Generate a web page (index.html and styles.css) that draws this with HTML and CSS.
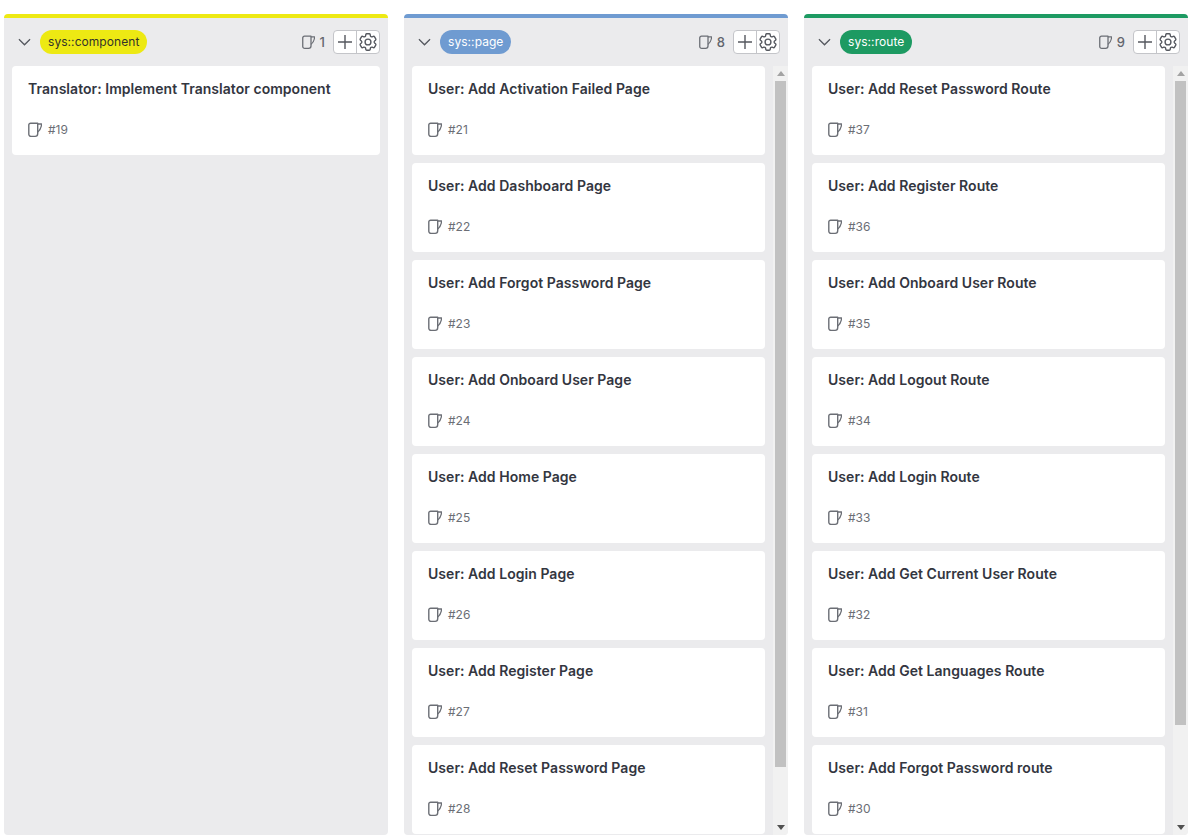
FILE: index.html
```html
<!DOCTYPE html>
<html lang="en">
<head>
    <meta charset="UTF-8">
    <meta name="viewport" content="width=device-width, initial-scale=1.0">
    <title>Board</title>
    <link rel="stylesheet" href="styles.css">
</head>
<body>
    <svg class="sprites" width="0" height="0">
        <symbol id="mug" viewBox="0 0 14 16">
            <path d="M2.6 1.2h7.1v10.6a2.6 2.6 0 0 1-2.6 2.6H3a2.2 2.2 0 0 1-2.2-2.2V3a1.8 1.8 0 0 1 1.8-1.8z" fill="none" stroke="currentColor" stroke-width="1.4" stroke-linejoin="round"/>
            <path d="M9.7 2h3.9c-.2 3.2-1.5 6-3.9 8" fill="none" stroke="currentColor" stroke-width="1.3" stroke-linejoin="round"/>
        </symbol>
        <symbol id="chevron" viewBox="0 0 14 8">
            <path d="M1 1l6 6 6-6" fill="none" stroke="currentColor" stroke-width="1.4"/>
        </symbol>
        <symbol id="plus" viewBox="0 0 14 14">
            <path d="M7 0v14M0 7h14" fill="none" stroke="currentColor" stroke-width="1.4"/>
        </symbol>
        <symbol id="gear" viewBox="0 0 24 24">
            <path fill="none" stroke="currentColor" stroke-width="1.5" stroke-linejoin="round" d="M9.594 3.94c.09-.542.56-.94 1.11-.94h2.593c.55 0 1.02.398 1.11.94l.213 1.281c.063.374.313.686.645.87.074.04.147.083.22.127.325.196.72.257 1.075.124l1.217-.456a1.125 1.125 0 0 1 1.37.49l1.296 2.247a1.125 1.125 0 0 1-.26 1.431l-1.003.827c-.293.241-.438.613-.43.992a7.723 7.723 0 0 1 0 .255c-.008.378.137.75.43.991l1.004.827c.424.35.534.955.26 1.43l-1.298 2.247a1.125 1.125 0 0 1-1.369.491l-1.217-.456c-.355-.133-.75-.072-1.076.124a6.47 6.47 0 0 1-.22.128c-.331.183-.581.495-.644.869l-.213 1.281c-.09.543-.56.94-1.11.94h-2.594c-.55 0-1.019-.398-1.11-.94l-.213-1.281c-.062-.374-.312-.686-.644-.87a6.52 6.52 0 0 1-.22-.127c-.325-.196-.72-.257-1.076-.124l-1.217.456a1.125 1.125 0 0 1-1.369-.49l-1.297-2.247a1.125 1.125 0 0 1 .26-1.431l1.004-.827c.292-.24.437-.613.43-.991a6.932 6.932 0 0 1 0-.255c.007-.38-.138-.751-.43-.992l-1.004-.827a1.125 1.125 0 0 1-.26-1.43l1.297-2.247a1.125 1.125 0 0 1 1.37-.491l1.216.456c.356.133.751.072 1.076-.124.072-.044.146-.086.22-.128.332-.183.582-.495.644-.869l.214-1.28Z"/>
            <circle cx="12" cy="12" r="3.2" fill="none" stroke="currentColor" stroke-width="1.5"/>
        </symbol>
    </svg>

    <div class="board">
        <section class="column column-component">
            <header class="column-head">
                <svg class="chevron"><use href="#chevron"/></svg>
                <span class="label label-component">sys::component</span>
                <span class="count"><svg class="mug"><use href="#mug"/></svg>1</span>
                <div class="actions">
                    <button class="action"><svg class="plus"><use href="#plus"/></svg></button>
                    <button class="action"><svg class="gear"><use href="#gear"/></svg></button>
                </div>
            </header>
            <div class="column-body">
                <ul class="cards">
                    <li class="card"><h3>Translator: Implement Translator component</h3><p><svg class="mug"><use href="#mug"/></svg>#19</p></li>
                </ul>
            </div>
        </section>

        <section class="column column-page">
            <header class="column-head">
                <svg class="chevron"><use href="#chevron"/></svg>
                <span class="label label-page">sys::page</span>
                <span class="count"><svg class="mug"><use href="#mug"/></svg>8</span>
                <div class="actions">
                    <button class="action"><svg class="plus"><use href="#plus"/></svg></button>
                    <button class="action"><svg class="gear"><use href="#gear"/></svg></button>
                </div>
            </header>
            <div class="column-body">
                <ul class="cards">
                    <li class="card"><h3>User: Add Activation Failed Page</h3><p><svg class="mug"><use href="#mug"/></svg>#21</p></li>
                    <li class="card"><h3>User: Add Dashboard Page</h3><p><svg class="mug"><use href="#mug"/></svg>#22</p></li>
                    <li class="card"><h3>User: Add Forgot Password Page</h3><p><svg class="mug"><use href="#mug"/></svg>#23</p></li>
                    <li class="card"><h3>User: Add Onboard User Page</h3><p><svg class="mug"><use href="#mug"/></svg>#24</p></li>
                    <li class="card"><h3>User: Add Home Page</h3><p><svg class="mug"><use href="#mug"/></svg>#25</p></li>
                    <li class="card"><h3>User: Add Login Page</h3><p><svg class="mug"><use href="#mug"/></svg>#26</p></li>
                    <li class="card"><h3>User: Add Register Page</h3><p><svg class="mug"><use href="#mug"/></svg>#27</p></li>
                    <li class="card"><h3>User: Add Reset Password Page</h3><p><svg class="mug"><use href="#mug"/></svg>#28</p></li>
                </ul>
                <div class="scrollbar">
                    <span class="arrow-up"></span>
                    <div class="track"><div class="thumb thumb-page"></div></div>
                    <span class="arrow-down"></span>
                </div>
            </div>
        </section>

        <section class="column column-route">
            <header class="column-head">
                <svg class="chevron"><use href="#chevron"/></svg>
                <span class="label label-route">sys::route</span>
                <span class="count"><svg class="mug"><use href="#mug"/></svg>9</span>
                <div class="actions">
                    <button class="action"><svg class="plus"><use href="#plus"/></svg></button>
                    <button class="action"><svg class="gear"><use href="#gear"/></svg></button>
                </div>
            </header>
            <div class="column-body">
                <ul class="cards">
                    <li class="card"><h3>User: Add Reset Password Route</h3><p><svg class="mug"><use href="#mug"/></svg>#37</p></li>
                    <li class="card"><h3>User: Add Register Route</h3><p><svg class="mug"><use href="#mug"/></svg>#36</p></li>
                    <li class="card"><h3>User: Add Onboard User Route</h3><p><svg class="mug"><use href="#mug"/></svg>#35</p></li>
                    <li class="card"><h3>User: Add Logout Route</h3><p><svg class="mug"><use href="#mug"/></svg>#34</p></li>
                    <li class="card"><h3>User: Add Login Route</h3><p><svg class="mug"><use href="#mug"/></svg>#33</p></li>
                    <li class="card"><h3>User: Add Get Current User Route</h3><p><svg class="mug"><use href="#mug"/></svg>#32</p></li>
                    <li class="card"><h3>User: Add Get Languages Route</h3><p><svg class="mug"><use href="#mug"/></svg>#31</p></li>
                    <li class="card"><h3>User: Add Forgot Password route</h3><p><svg class="mug"><use href="#mug"/></svg>#30</p></li>
                </ul>
                <div class="scrollbar">
                    <span class="arrow-up"></span>
                    <div class="track"><div class="thumb thumb-route"></div></div>
                    <span class="arrow-down"></span>
                </div>
            </div>
        </section>
    </div>
</body>
</html>
```

FILE: styles.css
```css
*{
    margin: 0;
    padding: 0;
    box-sizing: border-box;
}
html,body{
    height: 840px;
    overflow: hidden;
    background: #ffffff;
}
body{
    font-family: Inter, "Liberation Sans", sans-serif;
    color: #33363f;
}
.sprites{
    position: absolute;
}
.board{
    display: flex;
    gap: 16px;
    padding: 14px 1px 5px 4px;
    height: 840px;
}
.column{
    display: flex;
    flex-direction: column;
    width: 384px;
    background: #ebebed;
    border-top: 4px solid #ccc;
    border-radius: 4px;
    overflow: hidden;
}
.column-component{
    border-top-color: #ede913;
}
.column-page{
    border-top-color: #6f9bd1;
}
.column-route{
    border-top-color: #1d9a62;
}
.column-head{
    display: flex;
    align-items: center;
    height: 48px;
    flex: none;
    padding: 0 8px 0 14px;
}
.chevron{
    width: 13px;
    height: 8px;
    margin-right: 9px;
    color: #55585f;
}
.label{
    height: 24px;
    line-height: 24px;
    padding: 0 8px;
    border-radius: 12px;
    font-size: 12px;
    letter-spacing: 0.06px;
}
.label-component{
    background: #ede913;
    color: #33332a;
}
.label-page{
    background: #6f9bd1;
    color: #ffffff;
}
.label-route{
    background: #1d9a62;
    color: #ffffff;
}
.count{
    display: flex;
    align-items: center;
    gap: 5px;
    margin-left: auto;
    margin-right: 8px;
    font-size: 13px;
    font-weight: 500;
    color: #63666d;
}
.count .mug{
    width: 13px;
    height: 15px;
    margin-top: 1px;
}
.actions{
    display: flex;
    width: 47px;
    height: 24px;
    border: 1px solid #c4c5c9;
    border-radius: 4px;
    background: #ffffff;
    overflow: hidden;
}
.action{
    display: flex;
    flex: 1;
    align-items: center;
    justify-content: center;
    border: 0;
    background: none;
    color: #55585f;
}
.action + .action{
    border-left: 1px solid #c4c5c9;
}
.plus{
    width: 14px;
    height: 14px;
}
.gear{
    width: 22px;
    height: 22px;
    flex: none;
}
.mug{
    width: 14px;
    height: 16px;
    flex: none;
    color: #6b6e75;
}
.column-body{
    display: flex;
    flex: 1;
    min-height: 0;
}
.cards{
    display: flex;
    flex: 1;
    flex-direction: column;
    gap: 8px;
    list-style: none;
    padding: 0 8px;
    overflow: hidden;
}
.card{
    flex: none;
    height: 89px;
    padding: 14px 16px 0;
    background: #ffffff;
    border-radius: 4px;
}
.card h3{
    height: 18px;
    line-height: 18px;
    font-size: 14px;
    font-weight: 600;
    letter-spacing: 0.04px;
}
.card p{
    display: flex;
    align-items: center;
    gap: 6px;
    margin-top: 21px;
    height: 20px;
    font-size: 12px;
    color: #6b6e75;
}
.card p .mug{
    margin-top: 2px;
}
.scrollbar{
    display: flex;
    flex: none;
    flex-direction: column;
    align-items: center;
    width: 15px;
    background: #f1f1f1;
}
.arrow-up,.arrow-down{
    flex: none;
    width: 0;
    height: 0;
    margin: 5px 0;
    border-left: 4px solid transparent;
    border-right: 4px solid transparent;
}
.arrow-up{
    border-bottom: 5px solid #a3a3a3;
}
.arrow-down{
    border-top: 5px solid #505050;
}
.track{
    flex: 1;
    width: 100%;
    padding: 0 2px;
}
.thumb{
    background: #c1c1c1;
}
.thumb-page{
    height: 686px;
}
.thumb-route{
    height: 644px;
}
```
